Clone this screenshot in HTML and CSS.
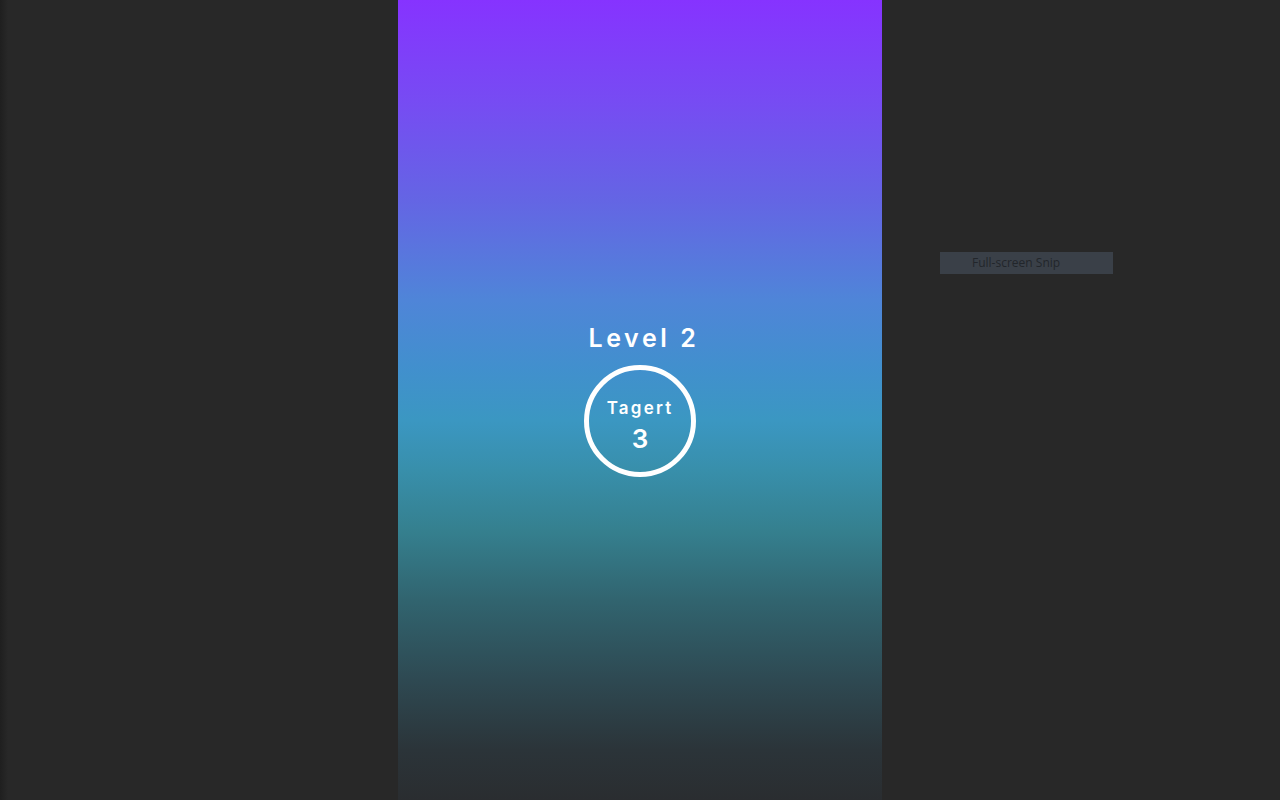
FILE: index.html
```html
<!DOCTYPE html>
<html>
<head>
<meta charset="utf-8">
<link rel="stylesheet" href="styles.css">
</head>
<body>
<div class="screen">
  <div class="panel">
    <div class="level">Level 2</div>
    <div class="target">
      <div class="target-label">Tagert</div>
      <div class="target-num">3</div>
    </div>
  </div>
  <div class="snip">Full-screen Snip</div>
</div>
</body>
</html>
```
FILE: styles.css
```css
html, body { margin: 0; padding: 0; }
body { background: #282828; width: 1280px; height: 800px; overflow: hidden; font-family: "Open Sans", "DejaVu Sans", sans-serif; }
.screen { position: relative; width: 1280px; height: 800px; display: flex; justify-content: center;
  background: linear-gradient(to right, #1f1f1f 0px, #282828 8px, #282828 100%); }
.panel { width: 484px; height: 800px;
  background: linear-gradient(to bottom, #8633ff 0px, #774bf3 100px, #6465e4 200px, #4f85d8 300px, #4190cd 370px, #3b97c2 420px, #388fab 470px, #35808f 530px, #31646f 600px, #2e4952 680px, #2b3439 750px, #2a2d30 800px);
  display: flex; flex-direction: column; align-items: center; padding-top: 322px; box-sizing: border-box; }
.level { color: #fff; font-family: "Inter", sans-serif; font-weight: 600; font-size: 25px; letter-spacing: 3.6px; line-height: 32px; padding-left: 8px; }
.target { width: 112px; height: 112px; box-sizing: border-box; border: 5px solid #fff; border-radius: 50%; margin-top: 11px;
  display: flex; flex-direction: column; align-items: center; justify-content: center; color: #fff; font-family: "Inter", sans-serif; font-weight: 600; }
.target-label { font-size: 17px; letter-spacing: 2.2px; line-height: 22px; margin-top: 8px; padding-left: 0px; }
.target-num { font-size: 26px; line-height: 30px; margin-top: 5px; }
.snip { position: absolute; left: 940px; top: 252px; width: 173px; height: 22px; background: #3a4048; color: #22262b; font-size: 12px; line-height: 22px; padding-left: 32px; box-sizing: border-box; font-family: "Open Sans", sans-serif; }
```
